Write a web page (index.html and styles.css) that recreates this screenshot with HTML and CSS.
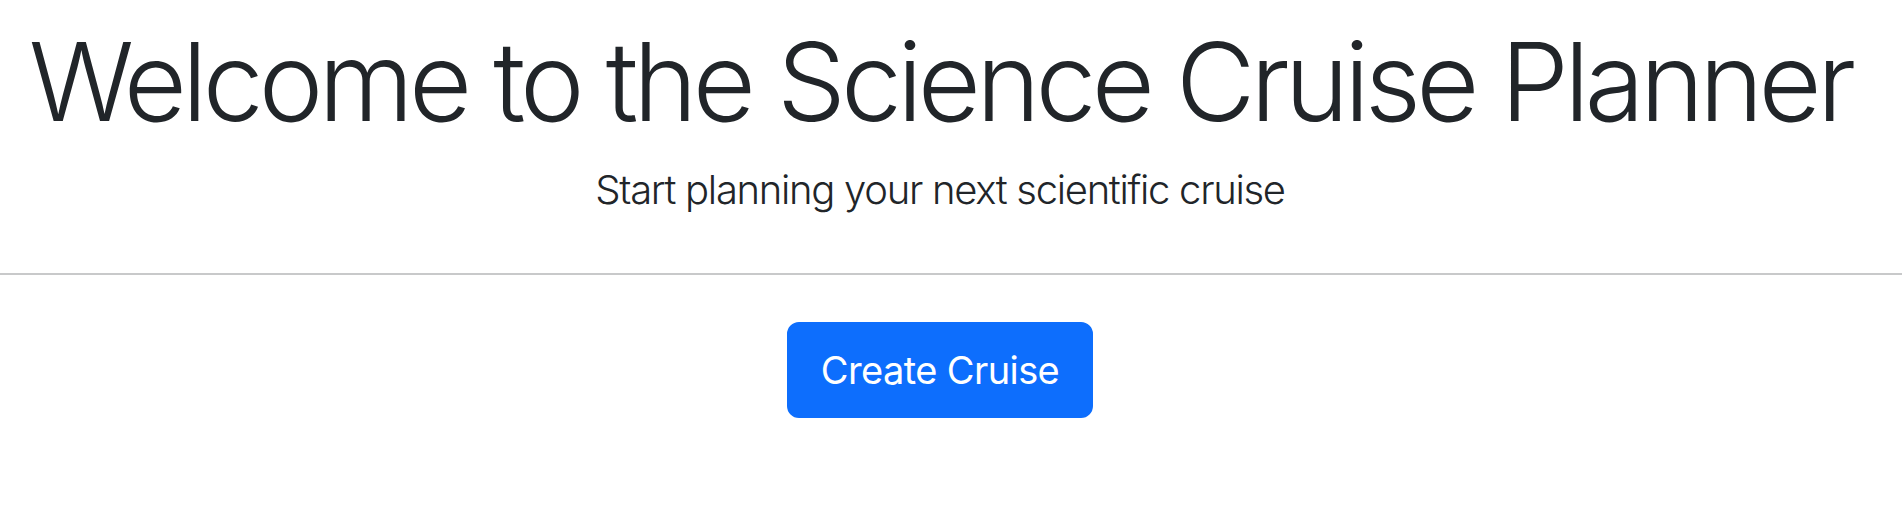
FILE: index.html
```html
<!DOCTYPE html>
<html lang="en">
<head>
<meta charset="utf-8">
<title>Science Cruise Planner</title>
<link rel="stylesheet" href="styles.css">
</head>
<body>
  <header class="hero">
    <h1 class="hero-title">Welcome to the Science Cruise Planner</h1>
    <p class="hero-lead">Start planning your next scientific cruise</p>
  </header>
  <hr class="divider">
  <div class="actions">
    <button class="btn-primary" type="button">Create Cruise</button>
  </div>
</body>
</html>
```

FILE: styles.css
```css
* { box-sizing: border-box; }
html, body { margin: 0; padding: 0; background: #fff; }
body {
  font-family: Inter, "Noto Sans", "Liberation Sans", sans-serif;
  color: #212529;
}
.hero {
  display: flex;
  flex-direction: column;
  align-items: center;
  padding: 16px 22px 0 0;
}
.hero-title {
  margin: 0;
  font-size: 109px;
  font-weight: 300;
  line-height: 131px;
  letter-spacing: -4.8px;
  white-space: nowrap;
}
.hero-lead {
  margin: 13px 0 0;
  font-size: 40px;
  font-weight: 300;
  line-height: 60px;
  letter-spacing: -1.3px;
}
.divider {
  margin: 53px 0 0;
  border: 0;
  border-top: 2px solid #c8c9ca;
  height: 0;
}
.actions {
  display: flex;
  justify-content: center;
  padding: 47px 22px 0 0;
}
.btn-primary {
  font-family: inherit;
  font-size: 38px;
  font-weight: 400;
  line-height: 60px;
  letter-spacing: -0.6px;
  white-space: nowrap;
  color: #fff;
  background: #0d6efd;
  border: 2px solid #0d6efd;
  border-radius: 12px;
  padding: 16px 0;
  width: 306px;
  height: 96px;
  display: flex;
  align-items: center;
  justify-content: center;
  cursor: pointer;
}
```
